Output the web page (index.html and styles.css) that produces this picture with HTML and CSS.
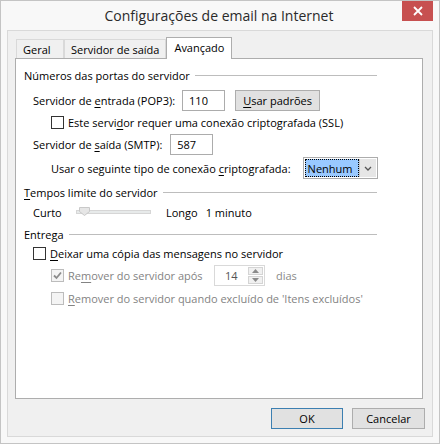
FILE: index.html
```html
<!DOCTYPE html>
<html lang="pt">
<head>
<meta charset="utf-8">
<link rel="stylesheet" href="styles.css">
</head>
<body>
<div class="window">
  <div class="titlebar">
    <div class="title">Configurações de email na Internet</div>
    <div class="close"><svg width="10" height="10" viewBox="0 0 10 10"><path d="M1 1L9 9M9 1L1 9" stroke="#fff" stroke-width="1.8"/></svg></div>
  </div>
  <div class="client">
    <div class="tabs">
      <div class="tab first">Geral</div>
      <div class="tab">Servidor de saída</div>
      <div class="tab active">Avançado</div>
    </div>
    <div class="panel">
      <div class="group g1"><span>Números das portas do servidor</span><i class="rule"></i></div>
      <div class="row r-pop">
        <span class="lbl">Servidor de <u>e</u>ntrada (POP3):</span>
        <span class="field f-pop">110</span>
        <span class="btn b-def"><u>U</u>sar padrões</span>
      </div>
      <div class="row r-ssl ind">
        <span class="cb"></span>
        <span>Este servi<u>d</u>or requer uma conexão criptografada (SSL)</span>
      </div>
      <div class="row r-smtp">
        <span class="lbl">Servidor de <u>s</u>aída (SMTP):</span>
        <span class="field f-smtp">587</span>
      </div>
      <div class="row r-enc ind">
        <span>Usar o seguinte tipo de conexão <u>c</u>riptografada:</span>
        <span class="combo"><span class="sel">Nenhum</span><span class="arrow"><svg width="8" height="5" viewBox="0 0 8 5"><path d="M1 1L4 4L7 1" fill="none" stroke="#555" stroke-width="1.3"/></svg></span></span>
      </div>
      <div class="group g2"><span><u>T</u>empos limite do servidor</span><i class="rule"></i></div>
      <div class="row r-slider">
        <span class="lbl-curto">Curto</span>
        <span class="slider"><i class="track"></i><svg class="thumb" width="11" height="9" viewBox="0 0 11 9"><path d="M0.5 0.5H10.5V4.5L5.5 8.5L0.5 4.5Z" fill="#e6e6e6" stroke="#c9c9c9"/></svg></span>
        <span class="lbl-longo">Longo</span>
        <span>1 minuto</span>
      </div>
      <div class="group g3"><span>Entrega</span><i class="rule"></i></div>
      <div class="row r-keep">
        <span class="cb"></span>
        <span><u>D</u>eixar uma cópia das mensagens no servidor</span>
      </div>
      <div class="row r-after ind dis">
        <span class="cb off"><svg width="11" height="11" viewBox="0 0 11 11"><path d="M2 5.5L4.5 8L9 2.5" fill="none" stroke="#8c8c8c" stroke-width="1.8"/></svg></span>
        <span class="lbl-after">Re<u>m</u>over do servidor após</span>
        <span class="spin"><span class="spin-val">14</span><span class="spin-btns"><span class="sb"><svg width="7" height="4" viewBox="0 0 7 4"><path d="M0 4L3.5 0L7 4Z" fill="#8a8a8a"/></svg></span><span class="sb"><svg width="7" height="4" viewBox="0 0 7 4"><path d="M0 0L3.5 4L7 0Z" fill="#8a8a8a"/></svg></span></span></span>
        <span class="dias">dias</span>
      </div>
      <div class="row r-del ind dis">
        <span class="cb off"></span>
        <span><u>R</u>emover do servidor quando excluído de 'Itens excluídos'</span>
      </div>
    </div>
    <div class="buttons">
      <span class="btn ok">OK</span>
      <span class="btn cancel">Cancelar</span>
    </div>
  </div>
</div>
</body>
</html>
```

FILE: styles.css
```css
* { box-sizing: border-box; }
html, body { margin: 0; padding: 0; }
body {
  width: 440px;
  height: 444px;
  background: #f7f7f7;
  font-family: "Open Sans", "Noto Sans", sans-serif;
  font-size: 11px;
  color: #000;
  overflow: hidden;
}
u { text-decoration: underline; text-underline-offset: 2px; }
.window {
  width: 440px;
  height: 444px;
  border: 1px solid #c4c4c4;
  background: #f8f8f8;
  display: flex;
  flex-direction: column;
  padding: 0 6px 6px 6px;
}
.titlebar {
  height: 29px;
  display: grid;
  grid-template-columns: 1fr auto;
}
.title {
  grid-column: 1 / 3;
  grid-row: 1;
  justify-self: center;
  align-self: center;
  font-size: 14px;
  color: #2a2a2a;
  margin-top: -1px;
  margin-left: -2px;
}
.close {
  grid-column: 2;
  grid-row: 1;
  align-self: start;
  width: 31px;
  height: 20px;
  background: #c75050;
  display: flex;
  align-items: center;
  justify-content: center;
}
.client {
  flex: 1;
  background: #f0f0f0;
  border: 1px solid #d9d9d9;
  padding: 6px 9px 0 7px;
  display: flex;
  flex-direction: column;
}
.tabs {
  display: flex;
  align-items: flex-end;
  height: 21px;
  padding-left: 1px;
  position: relative;
  z-index: 1;
}
.tab {
  height: 19px;
  border: 1px solid #d9d9d9;
  border-bottom: none;
  background: #f0f0f0;
  padding: 0 6px;
  display: flex;
  align-items: center;
}
.tab.first { width: 48px; }
.tab.active {
  height: 22px;
  margin-bottom: -1px;
  background: #fff;
  border-color: #adadad;
  padding: 2px 7px 0 7px;
  align-items: flex-start;
}
.panel {
  height: 341px;
  background: #fff;
  border: 1px solid #adadad;
  padding: 8px 8px 0 8px;
  display: flex;
  flex-direction: column;
}
.group {
  display: flex;
  align-items: center;
  height: 16px;
  margin-right: 37px;
}
.group .rule {
  flex: 1;
  border-top: 1px solid #bdbdbd;
  margin-left: 5px;
}
.row {
  display: flex;
  align-items: center;
  padding-left: 9px;
  white-space: nowrap;
}
.row > * { flex: none; }
.row.ind { padding-left: 27px; }
.r-pop { height: 22px; margin-top: 6px; }
.r-ssl { height: 20px; margin-top: 1px; }
.r-smtp { height: 22px; margin-top: 1px; }
.r-enc { height: 22px; margin-top: 2px; }
.g2 { margin-top: 5px; }
.r-slider { height: 18px; margin-top: 3px; }
.g3 { margin-top: 5px; }
.r-keep { height: 20px; margin-top: 1px; }
.r-after { height: 22px; margin-top: 1px; }
.r-del { height: 20px; margin-top: 2px; }

.field {
  height: 21px;
  border: 1px solid #acacac;
  background: #fff;
  padding: 1px 0 0 6px;
  display: flex;
  align-items: center;
}
.f-pop { width: 43px; margin-left: 7px; }
.f-smtp { width: 43px; margin-left: 8px; }
.btn {
  height: 21px;
  border: 1px solid #adadad;
  background: #e1e1e1;
  display: flex;
  align-items: center;
  justify-content: center;
}
.b-def { width: 85px; margin-left: 10px; }
.cb {
  width: 13px;
  height: 13px;
  border: 1px solid #333;
  background: #fff;
  margin-right: 4px;
  display: flex;
  align-items: center;
  justify-content: center;
}
.cb.off { border-color: #bcbcbc; background: #f4f4f4; }
.dis { color: #838383; }
.combo {
  margin-left: 12px;
  width: 75px;
  height: 22px;
  border: 1px solid #acacac;
  display: flex;
  padding: 1px;
}
.sel {
  flex: 1;
  background: #99c9ff;
  outline: 1px dotted #000;
  outline-offset: -1px;
  display: flex;
  align-items: center;
  padding-left: 3px;
}
.arrow {
  width: 17px;
  background: #e6e6e6;
  border-left: 1px solid #c6c6c6;
  display: flex;
  align-items: center;
  justify-content: center;
}
.lbl-curto { width: 43px; }
.slider {
  width: 75px;
  height: 10px;
  position: relative;
  display: flex;
  align-items: center;
}
.track {
  display: block;
  width: 100%;
  height: 4px;
  background: #e7eaea;
  border: 1px solid #d6d6d6;
}
.thumb { position: absolute; left: 3px; top: 0; }
.lbl-longo { margin-left: 15px; margin-right: 8px; }
.lbl-after { width: 146px; }
.spin {
  width: 51px;
  height: 21px;
  border: 1px solid #d9d9d9;
  background: #fff;
  display: flex;
}
.spin-val { flex: 1; display: flex; align-items: center; padding-left: 10px; color: #555; }
.spin-btns { width: 16px; display: flex; flex-direction: column; padding: 1px 1px 1px 0; gap: 1px; }
.sb {
  flex: 1;
  background: #f0f0f0;
  border: 1px solid #d4d4d4;
  display: flex;
  align-items: center;
  justify-content: center;
}
.dias { margin-left: 11px; color: #8a8a8a; }
.buttons {
  display: flex;
  justify-content: flex-end;
  gap: 9px;
  margin-top: 9px;
  margin-right: -2px;
}
.ok { width: 72px; border-color: #3c7fb1; }
.cancel { width: 73px; }
```
